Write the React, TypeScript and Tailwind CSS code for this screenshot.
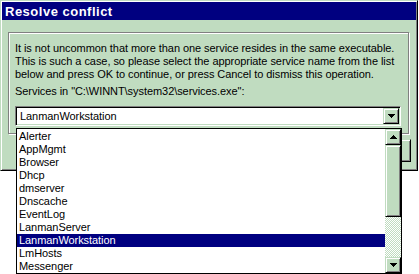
const services = [
  "Alerter",
  "AppMgmt",
  "Browser",
  "Dhcp",
  "dmserver",
  "Dnscache",
  "EventLog",
  "LanmanServer",
  "LanmanWorkstation",
  "LmHosts",
  "Messenger",
];

const selected = "LanmanWorkstation";

// classic raised 3D face
const raised =
  "bg-[#c0dcc0] border border-t-[#c0dcc0] border-l-[#c0dcc0] border-b-black border-r-black shadow-[inset_1px_1px_0_#fff,inset_-1px_-1px_0_#808080]";

function ArrowDown() {
  return (
    <svg width="7" height="4" viewBox="0 0 7 4" className="block">
      <path d="M0 0h7L3.5 4z" fill="#000" shapeRendering="crispEdges" />
    </svg>
  );
}

function ArrowUp() {
  return (
    <svg width="7" height="4" viewBox="0 0 7 4" className="block">
      <path d="M0 4h7L3.5 0z" fill="#000" shapeRendering="crispEdges" />
    </svg>
  );
}

export default function App() {
  return (
    <div
      className="relative w-[419px] h-[274px] bg-white overflow-hidden text-[11px] leading-[13px] tracking-[-0.06px] text-black"
      style={{ fontFamily: '"Liberation Sans", Arial, sans-serif' }}
    >
      {/* Dialog */}
      <div className="w-[418px] h-[171px] bg-[#c0dcc0] p-[1px] border border-t-[#c0dcc0] border-l-[#c0dcc0] border-b-black border-r-black shadow-[inset_1px_1px_0_#fff,inset_-1px_-1px_0_#808080]">
        <div className="h-[18px] bg-[#000080] text-white font-bold text-[13px] tracking-[0.5px] flex items-center pl-[3px]">
          Resolve conflict
        </div>

        {/* Group box */}
        <div className="mt-[12px] ml-[6px] w-[401px] h-[102px] border border-[#808080] shadow-[inset_1px_1px_0_#fff,1px_1px_0_#fff] pl-[6px] pt-[9px]">
          <p>
            It is not uncommon that more than one service resides in the same executable.
            <br />
            This is such a case, so please select the appropriate service name from the list
            <br />
            below and press OK to continue, or press Cancel to dismiss this operation.
          </p>
          <p className="mt-[4px]">Services in "C:\WINNT\system32\services.exe":</p>

          {/* Combo box */}
          <div className="mt-[8px] w-[386px] h-[20px] bg-white border border-t-[#808080] border-l-[#808080] border-b-white border-r-white shadow-[inset_1px_1px_0_#000,inset_-1px_-1px_0_#c0dcc0] p-[1px] flex">
            <div className="flex-1 flex items-center pl-[3px]">{selected}</div>
            <div className={`w-[16px] h-[16px] flex items-center justify-center ${raised}`}>
              <ArrowDown />
            </div>
          </div>
        </div>

        {/* Buttons */}
        <div className="mt-[5px] mr-[5px] flex justify-end gap-[6px]">
          <div className={`w-[75px] h-[23px] flex items-center justify-center ${raised}`}>OK</div>
          <div className={`w-[75px] h-[23px] flex items-center justify-center ${raised}`}>Cancel</div>
        </div>
      </div>

      {/* Dropped-down list */}
      <div className="absolute left-[16px] top-[128px] w-[386px] h-[146px] bg-white border border-black flex">
        <div className="flex-1 pt-[1px]">
          {services.map((s) => (
            <div
              key={s}
              className={`h-[13px] pl-[2px] whitespace-nowrap ${
                s === selected ? "bg-[#000080] text-white" : ""
              }`}
            >
              {s}
            </div>
          ))}
        </div>
        <div className="w-[16px] flex flex-col">
          <div className={`h-[16px] flex items-center justify-center ${raised}`}>
            <ArrowUp />
          </div>
          <div className={`h-[72px] ${raised}`} />
          <div className="flex-1 bg-[repeating-conic-gradient(#c0dcc0_0_25%,#fff_0_50%)] bg-[length:2px_2px]" />
          <div className={`h-[16px] flex items-center justify-center ${raised}`}>
            <ArrowDown />
          </div>
        </div>
      </div>
    </div>
  );
}
